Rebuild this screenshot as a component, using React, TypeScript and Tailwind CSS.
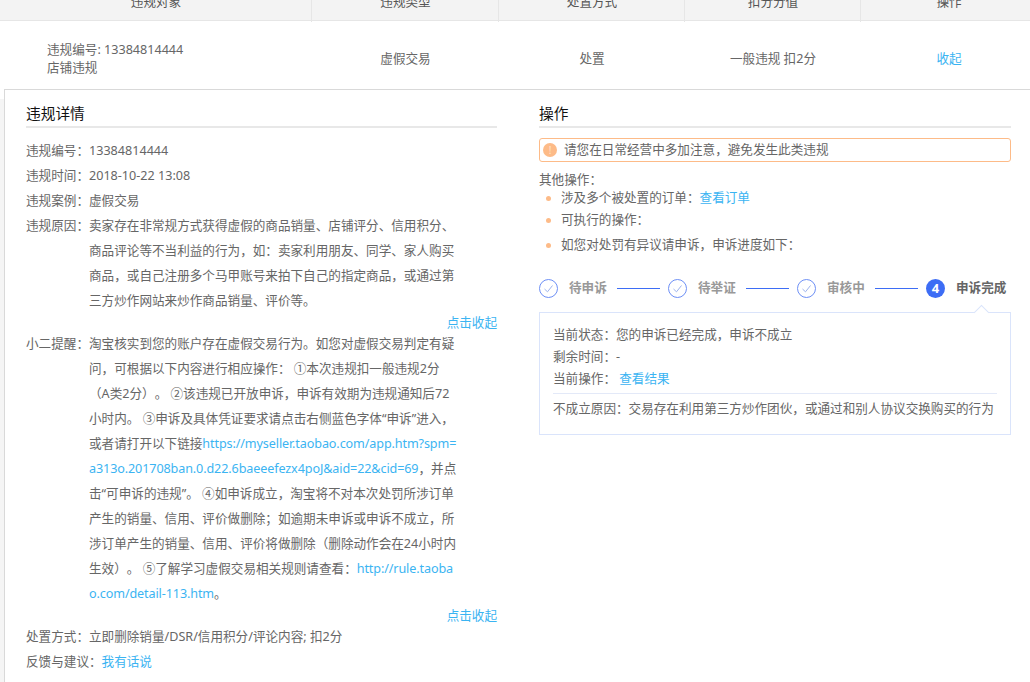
const COLS = "grid grid-cols-[311px_187px_186px_176px_170px]";

function Label({ name, children }: { name: string; children: React.ReactNode }) {
  return (
    <div className="flex">
      <span className="w-[63px] shrink-0 whitespace-nowrap">{name}</span>
      <div className="whitespace-nowrap">{children}</div>
    </div>
  );
}

function A({ children }: { children: React.ReactNode }) {
  return <a className="text-[#3bb4f2]">{children}</a>;
}

function Url({ children }: { children: React.ReactNode }) {
  return <a className="tracking-[-0.11px] text-[#3bb4f2]">{children}</a>;
}

function SectionTitle({ children }: { children: React.ReactNode }) {
  return <h3 className="h-[27px] border-b-2 border-[#e8e8e8] text-[14.7px] leading-[24px] text-[#111]">{children}</h3>;
}

function Collapse() {
  return <div className="-mb-[2px] text-right leading-[20px]"><A>点击收起</A></div>;
}

function Bullet({ className, children }: { className: string; children: React.ReactNode }) {
  return (
    <li className={`flex items-center ${className}`}>
      <span className="ml-[7px] mr-[10px] h-[5px] w-[5px] rounded-full bg-[#fdbb88]" />
      {children}
    </li>
  );
}

function DoneStep({ label }: { label: string }) {
  return (
    <>
      <svg viewBox="0 0 19 19" className="h-[19px] w-[19px] shrink-0" fill="none">
        <circle cx="9.5" cy="9.5" r="9" stroke="#6d8ff5" />
        <path d="M5.5 10l3 2.8L13.5 6.5" stroke="#9db3ee" />
      </svg>
      <span className="ml-[11px] w-[38px] whitespace-nowrap font-bold text-[#999]">{label}</span>
      <span className="ml-[10px] mr-[8px] h-px w-[43px] bg-[#3d6df5]" />
    </>
  );
}

export default function App() {
  return (
    <div className="h-[682px] w-[1030px] overflow-hidden bg-white font-['Noto_Sans','Noto_Sans_CJK_SC',sans-serif] text-[12.6px] text-[#666] [text-spacing-trim:space-all]">
      {/* Table head, scrolled off the top */}
      <div className={`${COLS} -mt-[20px] h-[41px] border-b border-[#e6e6e6] bg-[#f3f3f3] pt-[2px] text-center leading-[40px] text-[#555]`}>
        <div className="pl-[1px]">违规对象</div>
        <div className="border-l border-[#e6e6e6] pl-[1px]">违规类型</div>
        <div className="border-l border-[#e6e6e6] pl-[1px]">处置方式</div>
        <div className="border-l border-[#e6e6e6] pl-[1px]">扣分分值</div>
        <div className="border-l border-[#e6e6e6] pl-[7px]">操作</div>
      </div>

      {/* Row */}
      <div className={`${COLS} h-[68px] items-center pt-[8px] text-center`}>
        <div className="pl-[47px] text-left leading-[18px]">
          <div>违规编号: 13384814444</div>
          <div>店铺违规</div>
        </div>
        <div className="pl-[2px]">虚假交易</div>
        <div className="pl-[2px]">处置</div>
        <div className="pl-[2px]">一般违规 扣2分</div>
        <div className="pl-[8px]"><A>收起</A></div>
      </div>

      {/* Detail */}
      <div className="bg-[linear-gradient(#fff_10px,#f5f5f5_10px)] pl-[4px]">
        <div className="flex h-[600px] border-l border-t border-[#d9d9d9] bg-white pl-[21px] pt-[11px]">
          <div className="w-[471px] leading-[25px]">
            <SectionTitle>违规详情</SectionTitle>
            <div className="mt-[10px]">
              <Label name="违规编号：">13384814444</Label>
              <Label name="违规时间：">2018-10-22 13:08</Label>
              <Label name="违规案例：">虚假交易</Label>
              <Label name="违规原因：">
                卖家存在非常规方式获得虚假的商品销量、店铺评分、信用积分、<br />
                商品评论等不当利益的行为，如：卖家利用朋友、同学、家人购买<br />
                商品，或自己注册多个马甲账号来拍下自己的指定商品，或通过第<br />
                三方炒作网站来炒作商品销量、评价等。
              </Label>
              <Collapse />
              <Label name="小二提醒：">
                淘宝核实到您的账户存在虚假交易行为。如您对虚假交易判定有疑<br />
                问，可根据以下内容进行相应操作： ①本次违规扣一般违规2分<br />
                （A类2分）。 ②该违规已开放申诉，申诉有效期为违规通知后72<br />
                小时内。 ③申诉及具体凭证要求请点击右侧蓝色字体“申诉”进入，<br />
                或者请打开以下链接<Url>https://myseller.taobao.com/app.htm?spm=</Url><br />
                <Url>a313o.201708ban.0.d22.6baeeefezx4poJ&amp;aid=22&amp;cid=69</Url>，并点<br />
                击“可申诉的违规”。 ④如申诉成立，淘宝将不对本次处罚所涉订单<br />
                产生的销量、信用、评价做删除；如逾期未申诉或申诉不成立，所<br />
                涉订单产生的销量、信用、评价将做删除（删除动作会在24小时内<br />
                生效）。 ⑤了解学习虚假交易相关规则请查看：<Url>http://rule.taoba</Url><br />
                <Url>o.com/detail-113.htm</Url>。
              </Label>
              <Collapse />
              <div>处置方式：立即删除销量/DSR/信用积分/评论内容; 扣2分</div>
              <div>反馈与建议：<A>我有话说</A></div>
            </div>
          </div>

          <div className="ml-[42px] w-[472px]">
            <SectionTitle>操作</SectionTitle>
            <div className="mt-[10px] flex h-[24px] items-center rounded-[3px] border border-[#fdbb88] pl-[3px]">
              <span className="flex h-[14px] w-[14px] items-center justify-center rounded-full bg-[#fdbb88] text-[10px] text-[#ffe3cc]">!</span>
              <span className="ml-[7px]">请您在日常经营中多加注意，避免发生此类违规</span>
            </div>
            <div className="mt-[9px] leading-[18px]">其他操作：</div>
            <ul>
              <Bullet className="h-[19px]">涉及多个被处置的订单：<A>查看订单</A></Bullet>
              <Bullet className="mt-[1px] h-[22px]">可执行的操作：</Bullet>
              <Bullet className="mt-[3px] h-[22px]">如您对处罚有异议请申诉，申诉进度如下：</Bullet>
            </ul>

            {/* Steps */}
            <div className="mt-[23px] flex h-[19px] items-center">
              <DoneStep label="待申诉" />
              <DoneStep label="待举证" />
              <DoneStep label="审核中" />
              <span className="flex h-[19px] w-[19px] shrink-0 items-center justify-center rounded-full bg-[#3d6df5] text-[13px] font-bold text-white">4</span>
              <span className="ml-[11px] whitespace-nowrap font-bold text-[#666]">申诉完成</span>
            </div>

            <div className="relative mt-[14px] h-[123px] border border-[#dae4fb] px-[13px] pt-[11px] leading-[22px]">
              <span className="absolute -top-[6px] right-[23px] h-[11px] w-[11px] rotate-45 border-l border-t border-[#dae4fb] bg-white" />
              <div>当前状态：您的申诉已经完成，申诉不成立</div>
              <div>剩余时间：-</div>
              <div>当前操作： <A>查看结果</A></div>
              <div className="mt-[3px] whitespace-nowrap border-t border-[#e3e9f8] pt-[4px]">不成立原因：交易存在利用第三方炒作团伙，或通过和别人协议交换购买的行为</div>
            </div>
          </div>
        </div>
      </div>
    </div>
  );
}
